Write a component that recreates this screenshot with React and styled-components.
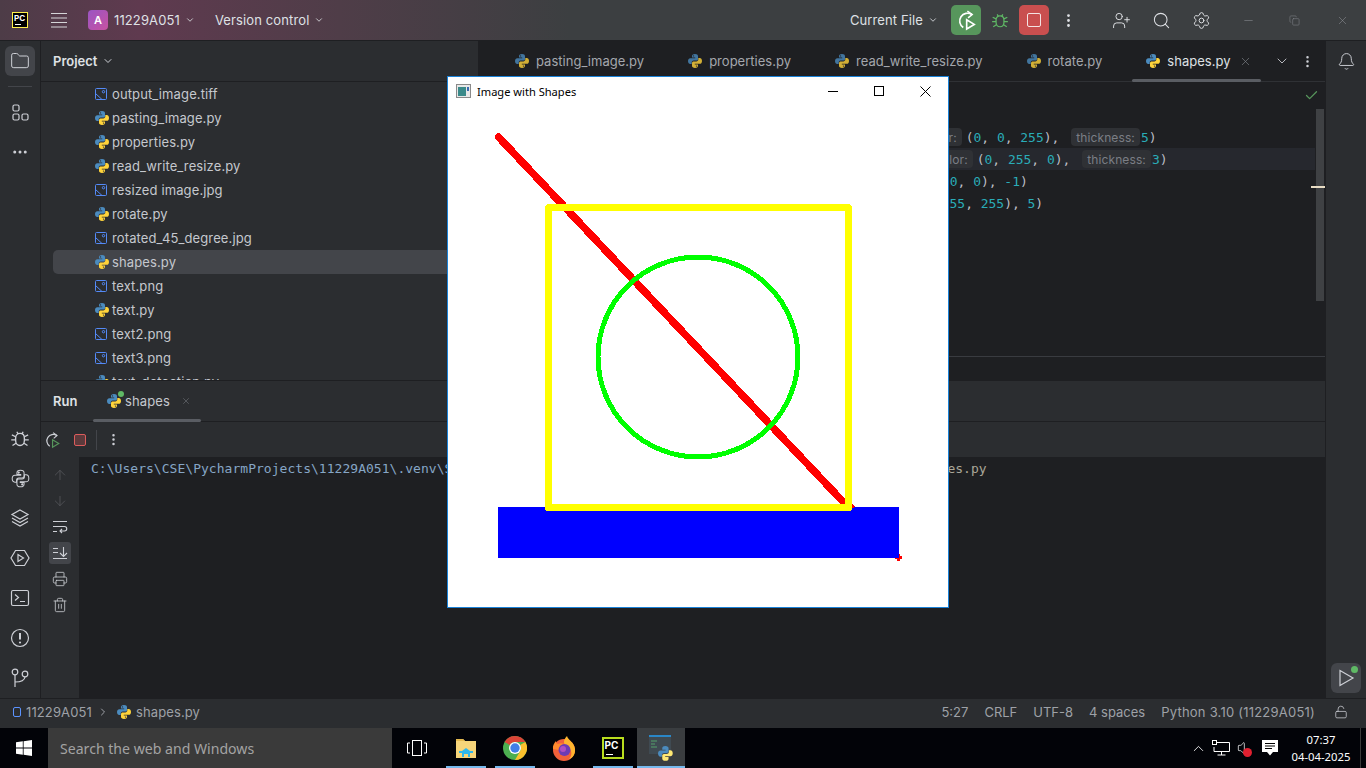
import React from "react";
import styled, { createGlobalStyle } from "styled-components";
import {
  ArrowDown,
  ArrowUp,
  Bell,
  Check,
  ChevronDown,
  ChevronRight,
  ChevronUp,
  Copy,
  Ellipsis,
  EllipsisVertical,
  Folder,
  LockOpen,
  Minus,
  Printer,
  Search,
  Settings,
  Trash2,
  UserPlus,
  Volume,
  X,
} from "lucide-react";

const Global = createGlobalStyle`
  * { box-sizing: border-box; }
  html, body { margin: 0; padding: 0; background: #1e1f22; }
  body { font-family: Inter, "Noto Sans", sans-serif; font-size: 13px; letter-spacing: 0.12px; overflow: hidden; }
`;

const Screen = styled.div`
  position: relative;
  width: 1366px;
  height: 768px;
  display: flex;
  flex-direction: column;
  overflow: hidden;
  color: #bcbec4;
`;

// title bar
const TitleBar = styled.div`
  height: 41px;
  flex: none;
  display: flex;
  align-items: center;
  border-bottom: 1px solid #1e1f22;
  background: linear-gradient(90deg, #4d3c47 0, #5f3a4f 140px, #4f3d48 340px, #3c3f41 570px);
  color: #dfe1e5;
`;
const PcBox = styled.div`
  flex: none;
  width: ${(p) => p.$size}px;
  height: ${(p) => p.$size}px;
  margin-left: ${(p) => p.$ml || 0}px;
  background: #000;
  border: ${(p) => p.$border}px solid ${(p) => p.$color};
  color: #fff;
  font-weight: 700;
  font-size: ${(p) => p.$font}px;
  letter-spacing: 0;
  line-height: 1;
  padding: 1px 0 0 1px;
  position: relative;
  &::after {
    content: "";
    position: absolute;
    left: 2px;
    bottom: 2px;
    width: ${(p) => p.$size * 0.35}px;
    height: 1px;
    background: #fff;
  }
`;
const Cell = styled.div`
  flex: none;
  width: ${(p) => p.$w}px;
  margin-left: ${(p) => p.$ml || 0}px;
  display: flex;
  align-items: center;
  justify-content: center;
  color: ${(p) => p.$color || "inherit"};
`;
const Avatar = styled.div`
  flex: none;
  width: 20px;
  height: 20px;
  margin-left: 21px;
  border-radius: 4px;
  background: linear-gradient(135deg, #9a55c4, #c852a0);
  color: #fff;
  font-size: 11px;
  font-weight: 600;
  display: flex;
  align-items: center;
  justify-content: center;
`;
const TitleText = styled.span`
  margin-left: ${(p) => p.$ml}px;
  white-space: nowrap;
`;
const TitleRight = styled.div`
  margin-left: auto;
  display: flex;
  align-items: center;
`;
const ActionBtn = styled.div`
  width: 30px;
  height: 30px;
  border-radius: 5px;
  background: ${(p) => p.$bg};
  display: flex;
  align-items: center;
  justify-content: center;
`;
const StopSquare = styled.div`
  width: 14px;
  height: 14px;
  border: 1.5px solid #f4e3e3;
  border-radius: 2px;
`;

// main area
const Body = styled.div`
  flex: 1;
  min-height: 0;
  display: flex;
  background: #2b2d30;
`;
const Strip = styled.div`
  width: 41px;
  flex: none;
  display: flex;
  flex-direction: column;
  align-items: center;
  gap: 10px;
  padding: 5px 0;
  background: #2b2d30;
  border-${(p) => p.$side}: 1px solid #1e1f22;
`;
const StripBtn = styled.div`
  width: 30px;
  height: 30px;
  flex: none;
  position: relative;
  border-radius: 6px;
  display: flex;
  align-items: center;
  justify-content: center;
  color: #ced0d6;
  background: ${(p) => (p.$active ? "#43454a" : "transparent")};
`;
const StripSep = styled.div`
  width: 24px;
  height: 1px;
  flex: none;
  background: #43454a;
`;
const StripBottom = styled.div`
  margin-top: auto;
  display: flex;
  flex-direction: column;
  gap: 10px;
`;
const GreenDot = styled.span`
  position: absolute;
  top: ${(p) => p.$top}px;
  right: ${(p) => p.$right}px;
  width: ${(p) => p.$s}px;
  height: ${(p) => p.$s}px;
  border-radius: 50%;
  background: #5fb865;
`;
const Center = styled.div`
  flex: 1;
  min-width: 0;
  display: flex;
  flex-direction: column;
`;
const TopArea = styled.div`
  height: 339px;
  flex: none;
  display: flex;
`;

// project tool window
const ProjectPanel = styled.div`
  width: 437px;
  flex: none;
  display: flex;
  flex-direction: column;
  overflow: hidden;
`;
const PanelHeader = styled.div`
  height: 41px;
  flex: none;
  display: flex;
  align-items: center;
  padding-left: 12px;
  gap: 5px;
  font-weight: 600;
  letter-spacing: 0;
  color: #dfe1e5;
  border-bottom: 1px solid #1e1f22;
`;
const FileList = styled.div`
  flex: 1;
  overflow: hidden;
`;
const FileRow = styled.div`
  height: 24px;
  display: flex;
  align-items: center;
  gap: 2px;
  margin-left: 12px;
  padding-left: 41px;
  border-radius: 5px 0 0 5px;
  background: ${(p) => (p.$selected ? "#43454a" : "transparent")};
  color: #c5c8ce;
  white-space: nowrap;
`;

// editor
const Editor = styled.div`
  flex: 1;
  min-width: 0;
  display: flex;
  flex-direction: column;
  background: #1e1f22;
  border-left: 1px solid #1e1f22;
`;
const TabStrip = styled.div`
  height: 41px;
  flex: none;
  display: flex;
  padding-left: 22px;
  border-bottom: 1px solid #2f3135;
  position: relative;
`;
const Tab = styled.div`
  flex: none;
  display: flex;
  align-items: center;
  position: relative;
  gap: 6px;
  padding: 0 30px 0 13px;
  letter-spacing: 0.02px;
  color: ${(p) => (p.$active ? "#dfe1e5" : "#a4a7ad")};
  white-space: nowrap;
  &::after {
    content: "";
    display: ${(p) => (p.$active ? "block" : "none")};
    position: absolute;
    left: 0;
    right: 0;
    bottom: -1px;
    height: 3px;
    border-radius: 2px;
    background: #5a5d63;
  }
`;
const TabClose = styled.span`
  position: absolute;
  right: 9px;
  top: 14px;
  display: flex;
  color: #7f8288;
`;
const TabTools = styled.div`
  margin-left: auto;
  display: flex;
  align-items: center;
  gap: 10px;
  padding-right: 10px;
  color: #ced0d6;
`;
const CodeArea = styled.div`
  flex: 1;
  position: relative;
  padding-top: 44px;
  overflow: hidden;
`;
const CodeLine = styled.div`
  height: 22px;
  display: flex;
  align-items: center;
  padding-left: ${(p) => p.$indent}px;
  background: ${(p) => (p.$current ? "#26282e" : "transparent")};
  margin-right: 10px;
  font-family: "DejaVu Sans Mono", "Liberation Mono", monospace;
  font-size: 13px;
  letter-spacing: -0.03px;
  white-space: pre;
  color: #bcbec4;
`;
const Num = styled.span`
  color: #2aacb8;
`;
const Hint = styled.span`
  height: 18px;
  display: inline-flex;
  align-items: center;
  padding: 0 5px;
  margin: ${(p) => (p.$gap ? "0 1px 0 12px" : "0 4px 0 0")};
  border-radius: 4px;
  background: #2f3135;
  color: #7b7e85;
  font-family: Inter, sans-serif;
  font-size: 12px;
  letter-spacing: 0.1px;
`;
const OkMark = styled.div`
  position: absolute;
  top: 6px;
  right: 6px;
  display: flex;
  color: #57965c;
`;
const ScrollThumb = styled.div`
  position: absolute;
  top: 27px;
  right: 1px;
  width: 8px;
  height: 192px;
  background: #3f4144;
`;
const ScrollMark = styled.div`
  position: absolute;
  top: 104px;
  right: 0;
  width: 14px;
  height: 2px;
  background: #e8dcc4;
`;
const EditorFooter = styled.div`
  height: 24px;
  flex: none;
  border-top: 1px solid #393b40;
`;

// run tool window
const RunPanel = styled.div`
  flex: 1;
  min-height: 0;
  display: flex;
  flex-direction: column;
  border-top: 1px solid #1e1f22;
`;
const RunHeader = styled.div`
  height: 41px;
  flex: none;
  display: flex;
  align-items: stretch;
  border-bottom: 1px solid #1e1f22;
`;
const RunLabel = styled.div`
  width: 52px;
  flex: none;
  padding-left: 12px;
  display: flex;
  align-items: center;
  font-weight: 600;
  letter-spacing: 0;
  color: #dfe1e5;
`;
const RunTab = styled.div`
  width: 108px;
  flex: none;
  position: relative;
  display: flex;
  align-items: center;
  gap: 3px;
  padding-left: 13px;
  color: #c5c8ce;
  &::after {
    content: "";
    position: absolute;
    left: 0;
    right: 0;
    bottom: -1px;
    height: 3px;
    border-radius: 2px;
    background: #5a5d63;
  }
`;
const RunIconWrap = styled.span`
  position: relative;
  display: flex;
`;
const RunToolbar = styled.div`
  height: 35px;
  flex: none;
  display: flex;
  align-items: center;
  padding-left: 2px;
`;
const StopSmall = styled.div`
  width: 12px;
  height: 12px;
  margin-left: 13px;
  border: 1px solid #db5c5c;
  border-radius: 2px;
  background: #5c3a3c;
`;
const ToolbarSep = styled.div`
  width: 1px;
  height: 20px;
  margin: 0 9px 0 10px;
  background: #43454a;
`;
const RunBody = styled.div`
  flex: 1;
  min-height: 0;
  display: flex;
`;
const SideTools = styled.div`
  width: 38px;
  flex: none;
  display: flex;
  flex-direction: column;
  align-items: center;
  padding-top: 7px;
  gap: 4px;
`;
const SideBtn = styled.div`
  width: 22px;
  height: 22px;
  display: flex;
  align-items: center;
  justify-content: center;
  border-radius: 3px;
  color: ${(p) => (p.$dim ? "#55575c" : "#ced0d6")};
  background: ${(p) => (p.$on ? "#43454a" : "transparent")};
`;
const Console = styled.div`
  flex: 1;
  min-width: 0;
  background: #1e1f22;
  padding: 3px 0 0 12px;
  font-family: "DejaVu Sans Mono", "Liberation Mono", monospace;
  font-size: 13px;
  line-height: 17px;
  letter-spacing: 0.03px;
  white-space: pre;
  color: #86a6c6;
  overflow: hidden;
`;
const ConsoleRest = styled.span`
  color: #aaa698;
`;

// status bar
const StatusBar = styled.div`
  height: 30px;
  flex: none;
  display: flex;
  align-items: center;
  padding: 0 0 3px 13px;
  background: #2b2d30;
  border-top: 1px solid #1e1f22;
  color: #9ea1a7;
`;
const ProjectDot = styled.span`
  width: 8px;
  height: 10px;
  border: 1.5px solid #5b93ff;
  border-radius: 2px;
  margin-right: 5px;
`;
const StatusRight = styled.div`
  margin-left: auto;
  display: flex;
  align-items: center;
  gap: 16px;
  padding-right: 17px;
  letter-spacing: 0;
`;
const Interpreter = styled.span`
  letter-spacing: 0.22px;
`;

// windows taskbar
const Taskbar = styled.div`
  height: 40px;
  flex: none;
  display: flex;
  align-items: stretch;
  background: #020308;
  color: #fff;
`;
const StartBtn = styled.div`
  width: 48px;
  flex: none;
  display: flex;
  align-items: center;
  justify-content: center;
`;
const SearchBox = styled.div`
  width: 344px;
  flex: none;
  padding-left: 12px;
  display: flex;
  align-items: center;
  background: #3a3a3a;
  color: #a3a3a3;
  font-family: "Noto Sans", "Open Sans", sans-serif;
  font-size: 14.1px;
  letter-spacing: 0;
`;
const TaskCell = styled.div`
  width: ${(p) => p.$w || 49}px;
  flex: none;
  position: relative;
  display: flex;
  align-items: center;
  justify-content: center;
  background: ${(p) => (p.$active ? "#3a3d40" : "transparent")};
  &::after {
    content: "";
    display: ${(p) => (p.$open ? "block" : "none")};
    position: absolute;
    left: ${(p) => (p.$active ? 0 : 5)}px;
    right: ${(p) => (p.$active ? 0 : 4)}px;
    bottom: 0;
    height: 2px;
    background: #76b9ed;
  }
`;
const Tray = styled.div`
  margin-left: auto;
  display: flex;
  align-items: center;
`;
const TrayCell = styled.div`
  width: ${(p) => p.$w}px;
  position: relative;
  display: flex;
  align-items: center;
  justify-content: center;
`;
const MuteX = styled.span`
  position: absolute;
  right: 4px;
  bottom: -1px;
  width: 9px;
  height: 9px;
  border-radius: 50%;
  background: #e02030;
`;
const Clock = styled.div`
  width: 60px;
  margin-left: 7px;
  text-align: center;
  font-family: "Noto Sans", "Open Sans", sans-serif;
  font-size: 11.3px;
  letter-spacing: 0;
  line-height: 17px;
`;
const ShowDesktop = styled.div`
  width: 1px;
  height: 100%;
  margin: 0 5px 0 9px;
  background: #3a3a3a;
`;

// cv2 window, sits on top of the IDE
const CvWindow = styled.div`
  position: absolute;
  left: 447px;
  top: 76px;
  width: 502px;
  height: 532px;
  background: #fff;
  border: 1px solid #1a82d8;
  display: flex;
  flex-direction: column;
`;
const CvTitle = styled.div`
  height: 30px;
  flex: none;
  display: flex;
  align-items: center;
  padding: 0 0 2px 8px;
  gap: 6px;
  color: #000;
  font-family: "Noto Sans", "Open Sans", sans-serif;
  font-size: 11.1px;
  letter-spacing: 0;
`;
const CvControls = styled.div`
  margin-left: auto;
  display: flex;
  align-items: center;
`;
const CvControl = styled.div`
  width: 46px;
  display: flex;
  justify-content: center;
`;
const CvCanvas = styled.svg`
  display: block;
  flex: none;
`;

const pyBlue = "M8 1C5.6 1 5 2 5 3.2V4.6h3.2v.6H3.3C2 5.2 1 6.2 1 8.1s1 3 2.3 3h1.4V9.4C4.7 8.3 5.6 7.5 6.7 7.5h2.7c.9 0 1.6-.7 1.6-1.6V3.2C11 1.9 9.9 1 8 1z";

const PyIcon = ({ dim }) => (
  <svg width="16" height="16" viewBox="0 0 16 16" style={{ flex: "none" }}>
    <g opacity={dim ? 0.8 : 1}>
      <path d={pyBlue} fill="#4b8bbe" />
      <path d={pyBlue} fill="#ffd43b" transform="rotate(180 8 8)" />
      <circle cx="6.5" cy="2.9" r=".7" fill="#2b2d30" />
      <circle cx="9.5" cy="13.1" r=".7" fill="#2b2d30" />
    </g>
  </svg>
);

const PyOutline = () => (
  <svg width="19" height="19" viewBox="0 0 16 16" fill="none" stroke="currentColor" strokeWidth=".85">
    <path d={pyBlue} />
    <path d={pyBlue} transform="rotate(180 8 8)" />
    <circle cx="6.5" cy="3" r=".5" fill="currentColor" />
    <circle cx="9.5" cy="13" r=".5" fill="currentColor" />
  </svg>
);

const ImageIcon = () => (
  <svg width="16" height="14" viewBox="0 0 16 14" fill="none" stroke="#548af7" strokeWidth="1" style={{ flex: "none" }}>
    <rect x="1.5" y="1.5" width="11" height="11" rx="1" />
    <circle cx="9.5" cy="4.7" r="1.2" />
    <path d="M1.5 6.5 8 12.5" />
  </svg>
);

const MenuIcon = () => (
  <svg width="16" height="16" viewBox="0 0 16 16" stroke="#d5d5d8" strokeWidth="1">
    <path d="M0 1.5h16M0 6h16M0 10.500h16M0 15h16" />
  </svg>
);

const Rerun = ({ color, play, size = 22, sw = 1.2 }) => (
  <svg width={size} height={size} viewBox="0 0 16 16" fill="none" stroke={color} strokeWidth={sw}>
    <path d="M12.2 4A5.6 5.6 0 1 0 6 13.5" />
    <path d="M9 1.5 12.5 4 9.500 6.500" strokeWidth={sw * 0.9} />
    <path d="M8.5 7.800v6.700l5.500-3.300z" stroke={play} />
  </svg>
);

const BugIcon = ({ color, size }) => (
  <svg width={size} height={size} viewBox="0 0 16 16" fill="none" stroke={color} strokeWidth="1.1">
    <path d="M4.5 8c0-2.3 1.5-3.7 3.500-3.700s3.500 1.400 3.500 3.700v2c0 2.300-1.500 4-3.500 4s-3.500-1.700-3.500-4z" />
    <path d="M5.5 3 6.500 4.800M10.500 3 9.500 4.800M1.500 5.500l3 1.500M14.500 5.500l-3 1.500M1 9.500h3.500M15 9.500h-3.500M2 14l2.800-1.800M14 14l-2.800-1.800" />
  </svg>
);

const StructureIcon = () => (
  <svg width="20" height="20" viewBox="0 0 20 20" fill="none" stroke="currentColor" strokeWidth="1.2">
    <rect x="3" y="3" width="6" height="6" rx="1.5" />
    <rect x="3" y="12" width="6" height="6" rx="1.5" />
    <rect x="12" y="12" width="6" height="6" rx="1.5" />
  </svg>
);

const LayersIcon = () => (
  <svg width="20" height="20" viewBox="0 0 20 20" fill="none" stroke="currentColor" strokeWidth="1.2">
    <path d="M10 2 18 6.500 10 11 2 6.500z" />
    <path d="M2 10 10 14.500 18 10" />
    <path d="M2 13.500 10 18 18 13.500" />
  </svg>
);

const RunHexIcon = () => (
  <svg width="20" height="20" viewBox="0 0 20 20" fill="none" stroke="currentColor" strokeWidth="1.2">
    <path d="M5.500 2.500h9L19 10l-4.500 7.500h-9L1 10z" />
    <path d="M8 6.500v7l5.500-3.500z" />
  </svg>
);

const TerminalIcon = () => (
  <svg width="20" height="20" viewBox="0 0 20 20" fill="none" stroke="currentColor" strokeWidth="1.2">
    <rect x="1.5" y="2.5" width="17" height="15" rx="1.5" />
    <path d="M5 6.500 8.500 9.500 5 12.500M10 13.500h5" />
  </svg>
);

const AlertIcon = () => (
  <svg width="20" height="20" viewBox="0 0 20 20" fill="none" stroke="currentColor" strokeWidth="1.2">
    <circle cx="10" cy="10" r="8.5" />
    <path d="M10 5v6.500" strokeWidth="2" />
    <circle cx="10" cy="14.5" r="1.1" fill="currentColor" stroke="none" />
  </svg>
);

const GitIcon = () => (
  <svg width="20" height="20" viewBox="0 0 20 20" fill="none" stroke="currentColor" strokeWidth="1.2">
    <circle cx="5" cy="4" r="2.8" />
    <circle cx="15" cy="6" r="2.8" />
    <path d="M5 7v12M5 14c5 0 9.500-1 10-5" />
  </svg>
);

const WrapIcon = () => (
  <svg width="16" height="16" viewBox="0 0 16 16" fill="none" stroke="currentColor" strokeWidth="1.1">
    <path d="M1 2.500h14M1 7.500h11.500a2 2 0 0 1 0 4.500H8M10 10l-2 2 2 2M1 12.500h4" />
  </svg>
);

const ScrollEndIcon = () => (
  <svg width="16" height="16" viewBox="0 0 16 16" fill="none" stroke="currentColor" strokeWidth="1.1">
    <path d="M1 3.500h5M1 7.500h5M1 13.500h14M11.500 2v9.500M8 8l3.500 3.500L15 8" />
  </svg>
);

const WinLogo = () => (
  <svg width="16" height="16" viewBox="0 0 16 16" fill="#fff">
    <path d="M0 2.300 6.800 1.300v6.300H0zM7.600 1.200 16 0v7.600H7.600zM0 8.400h6.800v6.300L0 13.700zM7.600 8.400H16V16l-8.400-1.200z" />
  </svg>
);

const TaskViewIcon = () => (
  <svg width="20" height="16" viewBox="0 0 20 16" fill="none" stroke="#fff" strokeWidth="1">
    <rect x="5.5" y=".5" width="9" height="15" />
    <path d="M3 3H.5v10H3M17 3h2.500v10H17" />
  </svg>
);

const ExplorerIcon = () => (
  <svg width="22" height="22" viewBox="0 0 22 22">
    <path d="M1 2h7l2 2h11v17H1z" fill="#f6d57a" />
    <path d="M1 2h7l2 2H1z" fill="#e4b94f" />
    <path d="M7 20v-6l4-3 4 3v6z" fill="#2fb7ec" />
    <path d="M4 14h14v2H4z" fill="#2fb7ec" />
    <path d="M9 17h4v4H9z" fill="#f6d57a" />
  </svg>
);

const ChromeIcon = () => (
  <svg width="24" height="24" viewBox="0 0 24 24">
    <circle cx="12" cy="12" r="12" fill="#4caf50" />
    <path d="M12 0a12 12 0 0 1 10.400 6H12a6 6 0 0 0-5.200 3L1.600 6A12 12 0 0 1 12 0z" fill="#db4437" />
    <path d="M22.400 6A12 12 0 0 1 12 24l5.200-9a6 6 0 0 0 0-6z" fill="#fbc02d" />
    <circle cx="12" cy="12" r="6" fill="#fff" />
    <circle cx="12" cy="12" r="4.7" fill="#3f7fe8" />
  </svg>
);

const FirefoxIcon = () => (
  <svg width="24" height="26" viewBox="0 0 24 26">
    <circle cx="12" cy="15" r="11" fill="#f2613a" />
    <path d="M15 1c1 4 7 6 8 13 .5 5-2 9-6 10 3-3 3-7 1-10-2-2-6-3-6-7 0-2 1-4 3-6z" fill="#ffb52e" />
    <path d="M1 14c-.5-3 1-6 3-8 0 2 1 3 2 3 2-1 4-1 6 0-3 1-5 3-5 6z" fill="#ff8a2e" />
    <circle cx="12.5" cy="15" r="6" fill="#6d3bb5" />
    <circle cx="11" cy="14" r="3" fill="#b04fc0" />
  </svg>
);

const PythonAppIcon = () => (
  <svg width="26" height="28" viewBox="0 0 26 28">
    <rect x="1" y="1" width="22" height="19" fill="#3f4a52" />
    <rect x="1" y="1" width="22" height="2" fill="#2a87c8" />
    <path d="M3 7h6M3 10h4M3 13h6" stroke="#55a06a" strokeWidth="1" />
    <g transform="translate(9 11) scale(1.05)">
      <path d={pyBlue} fill="#4b8bbe" />
      <path d={pyBlue} fill="#ffe873" transform="rotate(180 8 8)" />
    </g>
  </svg>
);

const NetworkIcon = () => (
  <svg width="18" height="16" viewBox="0 0 18 16" fill="none" stroke="#fff" strokeWidth="1">
    <path d="M5 2.500h12.500v9H2V7M9.500 11.500V15M5.500 15h8" />
    <rect x=".5" y=".5" width="4" height="4" fill="#000" />
  </svg>
);

const ActionCenter = () => (
  <svg width="16" height="16" viewBox="0 0 16 16" fill="#fff">
    <path d="M0 0h16v12h-5l-3 3.500L5 12H0z" />
    <path d="M3 3.500h10M3 6h10M3 8.500h7" stroke="#000" strokeWidth="1" />
  </svg>
);

const files = [
  ["output_image.tiff", "img"],
  ["pasting_image.py", "py"],
  ["properties.py", "py"],
  ["read_write_resize.py", "py"],
  ["resized image.jpg", "img"],
  ["rotate.py", "py"],
  ["rotated_45_degree.jpg", "img"],
  ["shapes.py", "py"],
  ["text.png", "img"],
  ["text.py", "py"],
  ["text2.png", "img"],
  ["text3.png", "img"],
  ["text_detection.py", "py"],
];

const tabs = ["pasting_image.py", "properties.py", "read_write_resize.py", "rotate.py"];

const App = () => {
  return (
    <Screen>
      <Global />
      <TitleBar>
        <PcBox $ml={12} $size={16} $border={1} $color="#fff14a" $font={8}>PC</PcBox>
        <Cell $w={16} $ml={23}><MenuIcon /></Cell>
        <Avatar>A</Avatar>
        <TitleText $ml={6}>11229A051</TitleText>
        <Cell $w={10} $ml={5}><ChevronDown size={12} /></Cell>
        <TitleText $ml={20}>Version control</TitleText>
        <Cell $w={10} $ml={5}><ChevronDown size={12} /></Cell>
        <TitleRight>
          <TitleText $ml={0}>Current File</TitleText>
          <Cell $w={10} $ml={5}><ChevronDown size={12} /></Cell>
          <Cell $w={30} $ml={13}>
            <ActionBtn $bg="#57965c"><Rerun color="#fff" play="#fff" /></ActionBtn>
          </Cell>
          <Cell $w={38}><BugIcon color="#5fb865" size={18} /></Cell>
          <ActionBtn $bg="#c94f4f"><StopSquare /></ActionBtn>
          <Cell $w={38}><EllipsisVertical size={17} /></Cell>
          <Cell $w={40} $ml={14}><UserPlus size={19} strokeWidth={1.2} /></Cell>
          <Cell $w={40}><Search size={19} strokeWidth={1.3} /></Cell>
          <Cell $w={40}><Settings size={19} strokeWidth={1.2} /></Cell>
          <Cell $w={46} $ml={4} $color="#8f9297"><Minus size={13} strokeWidth={1} /></Cell>
          <Cell $w={47} $color="#8f9297"><Copy size={11} strokeWidth={1} /></Cell>
          <Cell $w={48} $color="#8f9297"><X size={13} strokeWidth={1} /></Cell>
        </TitleRight>
      </TitleBar>

      <Body>
        <Strip $side="right">
          <StripBtn $active><Folder size={20} strokeWidth={1.2} /></StripBtn>
          <StripSep />
          <StripBtn><StructureIcon /></StripBtn>
          <StripBtn><Ellipsis size={18} /></StripBtn>
          <StripBottom>
            <StripBtn><BugIcon color="#ced0d6" size={20} /></StripBtn>
            <StripBtn><PyOutline /></StripBtn>
            <StripBtn><LayersIcon /></StripBtn>
            <StripBtn><RunHexIcon /></StripBtn>
            <StripBtn><TerminalIcon /></StripBtn>
            <StripBtn><AlertIcon /></StripBtn>
            <StripBtn><GitIcon /></StripBtn>
          </StripBottom>
        </Strip>

        <Center>
          <TopArea>
            <ProjectPanel>
              <PanelHeader>Project <ChevronDown size={12} color="#ced0d6" /></PanelHeader>
              <FileList>
                {files.map(([name, kind]) => (
                  <FileRow key={name} $selected={name === "shapes.py"}>
                    {kind === "py" ? <PyIcon /> : <ImageIcon />}
                    {name}
                  </FileRow>
                ))}
              </FileList>
            </ProjectPanel>
            <Editor>
              <TabStrip>
                {tabs.map((t) => (
                  <Tab key={t}><PyIcon dim />{t}</Tab>
                ))}
                <Tab $active>
                  <PyIcon />shapes.py
                  <TabClose><X size={13} strokeWidth={1.2} /></TabClose>
                </Tab>
                <TabTools>
                  <ChevronDown size={16} strokeWidth={1.3} />
                  <EllipsisVertical size={15} />
                </TabTools>
              </TabStrip>
              <CodeArea>
                <CodeLine $indent={440}>
                  <Hint>color:</Hint>(<Num>0</Num>, <Num>0</Num>, <Num>255</Num>),<Hint $gap>thickness:</Hint><Num>5</Num>)
                </CodeLine>
                <CodeLine $indent={451} $current>
                  <Hint>color:</Hint>(<Num>0</Num>, <Num>255</Num>, <Num>0</Num>),<Hint $gap>thickness:</Hint><Num>3</Num>)
                </CodeLine>
                <CodeLine $indent={424}>
                  (<Num>255</Num>, <Num>0</Num>, <Num>0</Num>), <Num>-1</Num>)
                </CodeLine>
                <CodeLine $indent={416}>
                  (<Num>255</Num>, <Num>255</Num>, <Num>255</Num>), <Num>5</Num>)
                </CodeLine>
                <OkMark><Check size={15} strokeWidth={2} /></OkMark>
                <ScrollThumb />
                <ScrollMark />
              </CodeArea>
              <EditorFooter />
            </Editor>
          </TopArea>

          <RunPanel>
            <RunHeader>
              <RunLabel>Run</RunLabel>
              <RunTab>
                <RunIconWrap>
                  <PyIcon />
                  <GreenDot $top={-2} $right={-2} $s={6} />
                </RunIconWrap>
                shapes
                <Cell $w={10} $ml={8} $color="#7f8288"><X size={12} strokeWidth={1.2} /></Cell>
              </RunTab>
            </RunHeader>
            <RunToolbar>
              <Rerun color="#ced0d6" play="#57965c" size={18} sw={1.05} />
              <StopSmall />
              <ToolbarSep />
              <EllipsisVertical size={15} color="#ced0d6" />
            </RunToolbar>
            <RunBody>
              <SideTools>
                <SideBtn $dim><ArrowUp size={16} strokeWidth={1.2} /></SideBtn>
                <SideBtn $dim><ArrowDown size={16} strokeWidth={1.2} /></SideBtn>
                <SideBtn><WrapIcon /></SideBtn>
                <SideBtn $on><ScrollEndIcon /></SideBtn>
                <SideBtn><Printer size={16} strokeWidth={1.2} /></SideBtn>
                <SideBtn><Trash2 size={16} strokeWidth={1.2} /></SideBtn>
              </SideTools>
              <Console>
                {"C:\\Users\\CSE\\PycharmProjects\\11229A051\\.venv\\Scripts\\python.exe "}
                <ConsoleRest>{"C:\\Users\\CSE\\PycharmProjects\\11229A051\\a\\shapes.py"}</ConsoleRest>
              </Console>
            </RunBody>
          </RunPanel>
        </Center>

        <Strip $side="left">
          <StripBtn><Bell size={19} strokeWidth={1.2} /></StripBtn>
          <StripBottom>
            <StripBtn $active>
              <svg width="20" height="20" viewBox="0 0 20 20" fill="none" stroke="#ced0d6" strokeWidth="1.2">
                <path d="M4 2.500v15L17 10z" />
              </svg>
              <GreenDot $top={3} $right={3} $s={7} />
            </StripBtn>
          </StripBottom>
        </Strip>
      </Body>

      <StatusBar>
        <ProjectDot />
        11229A051
        <Cell $w={12} $ml={5}><ChevronRight size={12} /></Cell>
        <Cell $w={16} $ml={7}><PyIcon /></Cell>
        <TitleText $ml={4}>shapes.py</TitleText>
        <StatusRight>
          <span>5:27</span>
          <span>CRLF</span>
          <span>UTF-8</span>
          <span>4 spaces</span>
          <Interpreter>Python 3.10 (11229A051)</Interpreter>
          <Cell $w={16} $ml={2}><LockOpen size={14} strokeWidth={1.3} color="#ced0d6" /></Cell>
        </StatusRight>
      </StatusBar>

      <Taskbar>
        <StartBtn><WinLogo /></StartBtn>
        <SearchBox>Search the web and Windows</SearchBox>
        <TaskCell $w={49}><TaskViewIcon /></TaskCell>
        <TaskCell $open $w={49}><ExplorerIcon /></TaskCell>
        <TaskCell $open><ChromeIcon /></TaskCell>
        <TaskCell $w={49}><FirefoxIcon /></TaskCell>
        <TaskCell $open $w={49}>
          <PcBox $size={22} $border={2} $color="#b8dc1e" $font={10}>PC</PcBox>
        </TaskCell>
        <TaskCell $open $active $w={48}><PythonAppIcon /></TaskCell>
        <Tray>
          <TrayCell $w={20}><ChevronUp size={17} strokeWidth={1.2} /></TrayCell>
          <TrayCell $w={26}><NetworkIcon /></TrayCell>
          <TrayCell $w={22}>
            <Volume size={16} strokeWidth={1.1} />
            <MuteX />
          </TrayCell>
          <TrayCell $w={28}><ActionCenter /></TrayCell>
          <Clock>07:37<br />04-04-2025</Clock>
          <ShowDesktop />
        </Tray>
      </Taskbar>

      <CvWindow>
        <CvTitle>
          <svg width="15" height="14" viewBox="0 0 15 14">
            <rect x=".5" y=".5" width="14" height="13" fill="#e8e8e8" stroke="#8a8a8a" />
            <rect x="2" y="3" width="8" height="9" fill="#3a8a8a" />
            <rect x="11" y="3" width="2" height="4" fill="#3a6ab0" />
          </svg>
          Image with Shapes
          <CvControls>
            <CvControl>
              <svg width="10" height="10"><path d="M0 5.500h10" stroke="#000" /></svg>
            </CvControl>
            <CvControl>
              <svg width="10" height="10"><rect x=".5" y=".5" width="9" height="9" fill="none" stroke="#000" /></svg>
            </CvControl>
            <CvControl>
              <svg width="11" height="11"><path d="M.5.500l10 10M10.500.500l-10 10" stroke="#000" /></svg>
            </CvControl>
          </CvControls>
        </CvTitle>
        <CvCanvas width="500" height="500" viewBox="0 0 500 500" shapeRendering="crispEdges">
          <line x1="50.500" y1="30" x2="400" y2="400" stroke="#f00" strokeWidth="7.5" strokeLinecap="round" />
          <path d="M447 450.500h7M450.500 447v7" stroke="#f00" strokeWidth="3" />
          <circle cx="250" cy="250" r="100" fill="none" stroke="#0f0" strokeWidth="5" />
          <rect x="50" y="400" width="401" height="51" fill="#00f" />
          <rect x="100.500" y="100.500" width="300" height="300" fill="none" stroke="#ff0" strokeWidth="7" strokeLinejoin="round" />
          <path d="M404 397l3 3-3 1z" fill="#f00" />
        </CvCanvas>
      </CvWindow>
    </Screen>
  );
};

export default App;
